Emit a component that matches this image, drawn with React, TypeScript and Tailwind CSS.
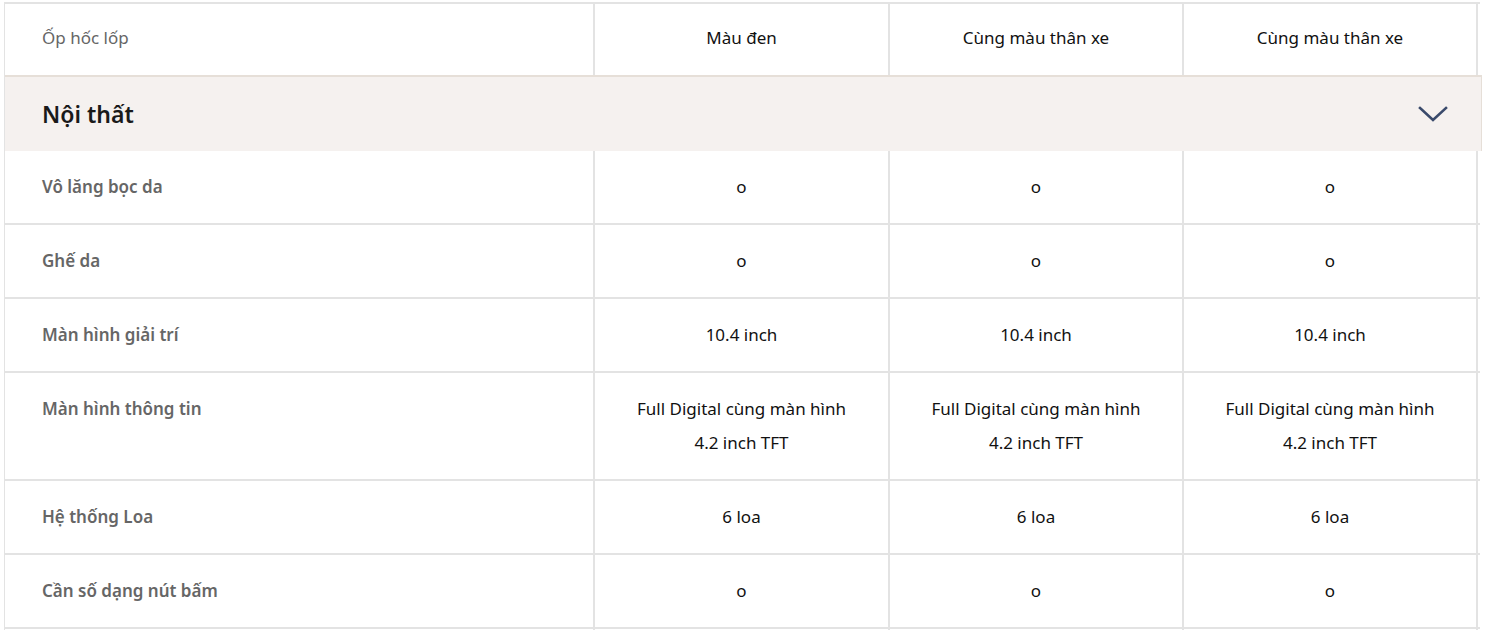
import React from 'react';

type Row = { label: string; values: string[][] };

const rows: Row[] = [
  { label: 'Vô lăng bọc da', values: [['o'], ['o'], ['o']] },
  { label: 'Ghế da', values: [['o'], ['o'], ['o']] },
  { label: 'Màn hình giải trí', values: [['10.4 inch'], ['10.4 inch'], ['10.4 inch']] },
  {
    label: 'Màn hình thông tin',
    values: [
      ['Full Digital cùng màn hình', '4.2 inch TFT'],
      ['Full Digital cùng màn hình', '4.2 inch TFT'],
      ['Full Digital cùng màn hình', '4.2 inch TFT'],
    ],
  },
  { label: 'Hệ thống Loa', values: [['6 loa'], ['6 loa'], ['6 loa']] },
  { label: 'Cần số dạng nút bấm', values: [['o'], ['o'], ['o']] },
];

const grid = 'grid grid-cols-[590px_295px_294px_294px]';
const font = { fontFamily: '"Noto Sans", sans-serif' };
const cell = 'border-r-2 border-[#e3e3e3] pt-[19px] pb-[19px] text-[17px] leading-[34px]';

const SpecRow = ({ row }: { row: Row }) => (
  <div className={`${grid} border-b-2 border-[#e3e3e3]`}>
    <div className={`${cell} pl-[37px] font-semibold text-[#666]`}>{row.label}</div>
    {row.values.map((lines, i) => (
      <div key={i} className={`${cell} text-center text-[#111]`}>
        {lines.map((l, j) => (
          <div key={j}>{l}</div>
        ))}
      </div>
    ))}
  </div>
);

export default function App() {
  return (
    <div className="h-screen overflow-hidden bg-white pt-[2px] pl-[4px]" style={font}>
      <div className="w-[1476px] border-t-2 border-l border-[#e3e3e3]">
        <div className={grid}>
          <div className="border-r-2 border-[#e3e3e3] pt-[17px] pb-[20px] pl-[37px] text-[17px] leading-[34px] text-[#666]">
            Ốp hốc lốp
          </div>
          {['Màu đen', 'Cùng màu thân xe', 'Cùng màu thân xe'].map((v, i) => (
            <div key={i} className="border-r-2 border-[#e3e3e3] pt-[17px] pb-[20px] text-center text-[17px] leading-[34px] text-[#111]">
              {v}
            </div>
          ))}
        </div>

        <div className="-mr-[2px] flex h-[76px] items-center justify-between border-t-2 border-r border-[#e6dfd8] bg-[#f5f1ef] pr-[33px] pl-[37px]">
          <span className="text-[23px] font-semibold text-[#1a1a1a]">Nội thất</span>
          <svg width="30" height="17" viewBox="0 0 30 17" fill="none">
            <path d="M2 2 L15 14 L28 2" stroke="#3a4a6b" strokeWidth="2.6" strokeLinecap="square" />
          </svg>
        </div>

        {rows.map((r, i) => (
          <SpecRow key={i} row={r} />
        ))}

        <div className={`${grid} h-[20px]`}>
          <div className="border-r-2 border-[#e3e3e3]" />
          <div className="border-r-2 border-[#e3e3e3]" />
          <div className="border-r-2 border-[#e3e3e3]" />
          <div className="border-r-2 border-[#e3e3e3]" />
        </div>
      </div>
    </div>
  );
}
